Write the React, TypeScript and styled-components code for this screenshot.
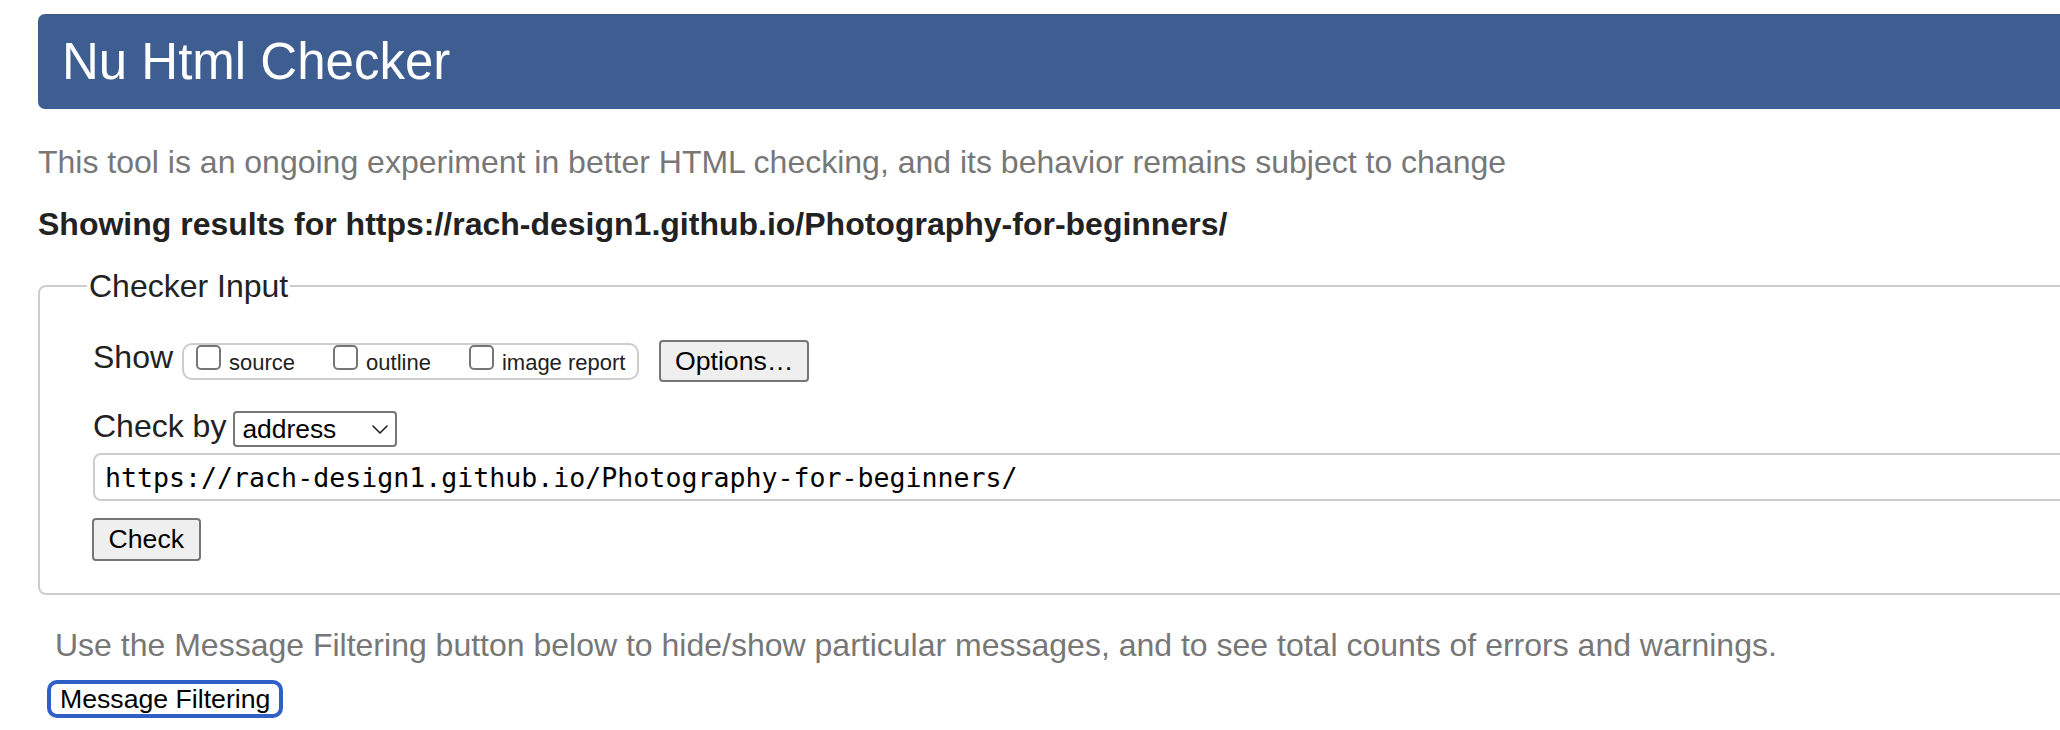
import { createGlobalStyle } from 'styled-components'
import styled from 'styled-components'

const showOptions = ['source', 'outline', 'image report']

const checkedUrl = 'https://rach-design1.github.io/Photography-for-beginners/'

const App = () => {
  return (
    <>
      <GlobalStyle />
      <Page>
        <Header>
          <Title>Nu Html Checker</Title>
        </Header>
        <Intro>This tool is an ongoing experiment in better HTML checking, and its behavior remains subject to change</Intro>
        <ResultsFor>Showing results for {checkedUrl}</ResultsFor>
        <InputFieldset>
          <InputLegend>Checker Input</InputLegend>
          <FormBody>
            <ShowRow>
              <RowLabel $nudge={8}>Show</RowLabel>
              <OptionGroup>
                {showOptions.map((option) => (
                  <OptionLabel key={option}>
                    <CheckBox />
                    <OptionText>{option}</OptionText>
                  </OptionLabel>
                ))}
              </OptionGroup>
              <GreyButton $padX={13.5} $height={42} $ml={20}>
                Options…
              </GreyButton>
            </ShowRow>
            <CheckByRow>
              <CheckByLabel>Check by</CheckByLabel>
              <SelectBox>
                <span>address</span>
                <svg width="16" height="9" viewBox="0 0 16 9" fill="none">
                  <path d="M1 1l7 7 7-7" stroke="#222" strokeWidth="1.6" strokeLinecap="round" strokeLinejoin="round" />
                </svg>
              </SelectBox>
            </CheckByRow>
            <UrlField>{checkedUrl}</UrlField>
            <SubmitRow>
              <GreyButton $padX={14.5} $height={43} $ml={-1}>
                Check
              </GreyButton>
            </SubmitRow>
          </FormBody>
        </InputFieldset>
        <FilterHint>
          Use the Message Filtering button below to hide/show particular messages, and to see total counts of errors and
          warnings.
        </FilterHint>
        <FilterButton>Message Filtering</FilterButton>
      </Page>
    </>
  )
}

export default App

const GlobalStyle = createGlobalStyle`
  html, body {
    margin: 0;
    padding: 0;
    background: #fff;
    overflow: hidden;
  }

  body {
    font-family: "Liberation Sans", Arial, Helvetica, sans-serif;
  }
`

const Page = styled.div`
  width: 2400px;
  box-sizing: border-box;
  padding: 14px 0 40px 38px;
`

const Header = styled.header`
  display: flex;
  align-items: center;
  height: 95px;
  padding-left: 24px;
  background: #3e5d91;
  border-radius: 7px;
`

const Title = styled.h1`
  margin: 0;
  font-size: 51px;
  font-weight: 400;
  line-height: 1;
  color: #fff;
`

const Intro = styled.p`
  margin: 35px 0 0;
  font-size: 32px;
  line-height: 36px;
  color: #777;
`

const ResultsFor = styled.p`
  margin: 26px 0 0;
  font-size: 32px;
  font-weight: 700;
  line-height: 36px;
  color: #222;
`

const InputFieldset = styled.fieldset`
  margin: 26px 0 0;
  padding: 0 0 32px 53px;
  min-width: 0;
  border: 2px solid #cdcdcd;
  border-radius: 8px;
`

const InputLegend = styled.legend`
  margin-left: -6px;
  padding: 0 2px;
  font-size: 32px;
  line-height: 36px;
  color: #222;
`

const FormBody = styled.div`
  display: flex;
  flex-direction: column;
  padding-top: 36px;
`

const ShowRow = styled.div`
  display: flex;
  align-items: center;
  height: 42px;
`

const RowLabel = styled.span<{ $nudge: number }>`
  font-size: 32px;
  line-height: 36px;
  padding-bottom: ${({ $nudge }) => $nudge}px;
  color: #222;
`

const OptionGroup = styled.div`
  display: flex;
  align-items: flex-start;
  gap: 38px;
  box-sizing: border-box;
  height: 37px;
  margin-left: 9px;
  padding: 0 12px;
  border: 2px solid #cdcdcd;
  border-radius: 10px;
`

const OptionLabel = styled.label`
  display: flex;
  align-items: baseline;
  gap: 8px;
`

const CheckBox = styled.span`
  display: block;
  width: 25px;
  height: 25px;
  box-sizing: border-box;
  border: 2px solid #767676;
  border-radius: 5px;
  background: #fff;
`

const OptionText = styled.span`
  font-size: 22px;
  color: #222;
`

const GreyButton = styled.button<{ $padX: number; $height: number; $ml: number }>`
  box-sizing: border-box;
  height: ${({ $height }) => $height}px;
  margin-left: ${({ $ml }) => $ml}px;
  padding: 0 ${({ $padX }) => $padX}px;
  font-family: "Liberation Sans", Arial, sans-serif;
  font-size: 26.67px;
  color: #000;
  background: #efefef;
  border: 2px solid #767676;
  border-radius: 4px;
`

const CheckByRow = styled.div`
  display: flex;
  align-items: flex-start;
  margin-top: 29px;
`

const CheckByLabel = styled.span`
  font-size: 32px;
  line-height: 30px;
  color: #222;
`

const SelectBox = styled.div`
  display: flex;
  align-items: center;
  justify-content: space-between;
  box-sizing: border-box;
  width: 164px;
  height: 36px;
  margin-left: 7px;
  padding: 0 7px 0 7px;
  font-size: 26.4px;
  color: #000;
  background: #fff;
  border: 2px solid #767676;
  border-radius: 4px;
`

const UrlField = styled.div`
  display: flex;
  align-items: center;
  box-sizing: border-box;
  height: 48px;
  margin-top: 6px;
  padding: 0 10px;
  font-family: "DejaVu Sans Mono", "Liberation Mono", monospace;
  font-size: 26.6px;
  color: #000;
  background: #fff;
  border: 2px solid #cdcdcd;
  border-radius: 8px;
`

const SubmitRow = styled.div`
  display: flex;
  margin-top: 17px;
`

const FilterHint = styled.p`
  margin: 32px 0 0;
  padding-left: 17px;
  font-size: 32px;
  line-height: 36px;
  color: #777;
`

const FilterButton = styled.button`
  display: block;
  box-sizing: border-box;
  height: 38px;
  margin: 17px 0 0 9px;
  padding: 0 9px;
  font-family: "Liberation Sans", Arial, sans-serif;
  font-size: 26.67px;
  color: #000;
  background: #fff;
  border: 4px solid #2e60c6;
  border-radius: 10px;
`
